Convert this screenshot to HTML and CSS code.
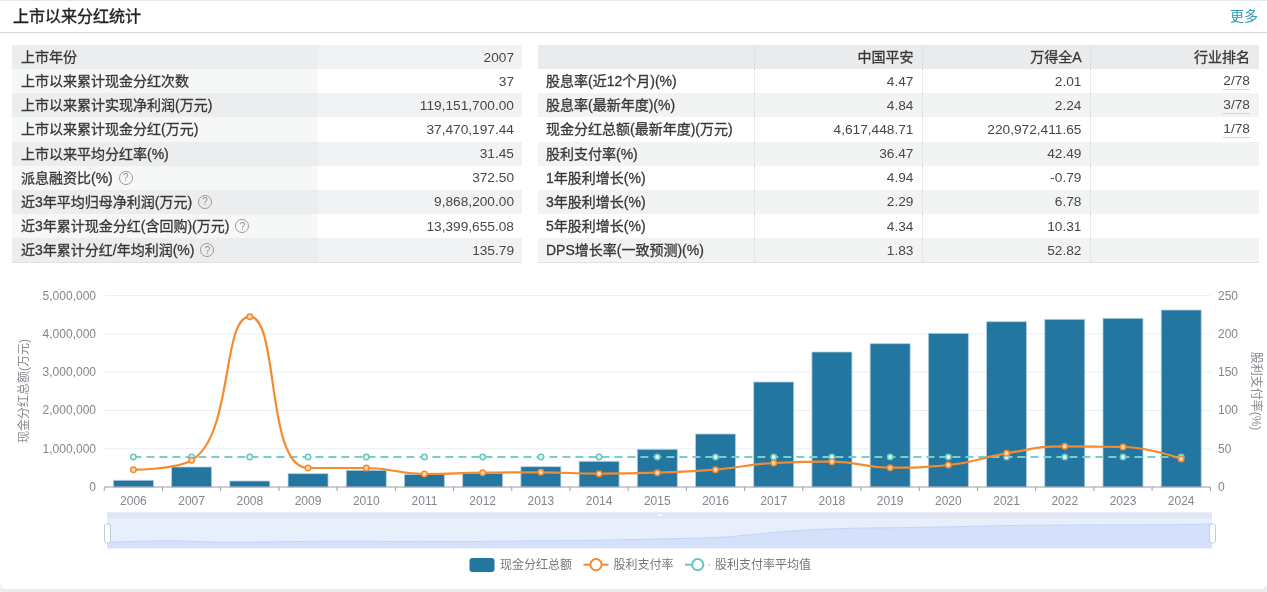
FILE: index.html
```html
<!DOCTYPE html>
<html lang="zh-CN">
<head>
<meta charset="utf-8">
<title>上市以来分红统计</title>
<link rel="stylesheet" href="styles.css">
</head>
<body>
<main class="card">
  <header class="card-head">
    <h1 class="card-title">上市以来分红统计</h1>
    <a class="more" href="#">更多</a>
  </header>
  <section class="tables">
    <div class="table table-left">
      <div class="row"><div class="label">上市年份</div><div class="val">2007</div></div>
      <div class="row"><div class="label">上市以来累计现金分红次数</div><div class="val">37</div></div>
      <div class="row"><div class="label">上市以来累计实现净利润(万元)</div><div class="val">119,151,700.00</div></div>
      <div class="row"><div class="label">上市以来累计现金分红(万元)</div><div class="val">37,470,197.44</div></div>
      <div class="row"><div class="label">上市以来平均分红率(%)</div><div class="val">31.45</div></div>
      <div class="row"><div class="label">派息融资比(%)<span class="help">?</span></div><div class="val">372.50</div></div>
      <div class="row"><div class="label">近3年平均归母净利润(万元)<span class="help">?</span></div><div class="val">9,868,200.00</div></div>
      <div class="row"><div class="label">近3年累计现金分红(含回购)(万元)<span class="help">?</span></div><div class="val">13,399,655.08</div></div>
      <div class="row"><div class="label">近3年累计分红/年均利润(%)<span class="help">?</span></div><div class="val">135.79</div></div>
    </div>
    <div class="table table-right">
      <div class="row head"><div class="label"></div><div class="val">中国平安</div><div class="val">万得全A</div><div class="val">行业排名</div></div>
      <div class="row"><div class="label">股息率(近12个月)(%)</div><div class="val">4.47</div><div class="val">2.01</div><div class="val"><span class="rank">2/78</span></div></div>
      <div class="row"><div class="label">股息率(最新年度)(%)</div><div class="val">4.84</div><div class="val">2.24</div><div class="val"><span class="rank">3/78</span></div></div>
      <div class="row"><div class="label">现金分红总额(最新年度)(万元)</div><div class="val">4,617,448.71</div><div class="val">220,972,411.65</div><div class="val"><span class="rank">1/78</span></div></div>
      <div class="row"><div class="label">股利支付率(%)</div><div class="val">36.47</div><div class="val">42.49</div><div class="val"></div></div>
      <div class="row"><div class="label">1年股利增长(%)</div><div class="val">4.94</div><div class="val">-0.79</div><div class="val"></div></div>
      <div class="row"><div class="label">3年股利增长(%)</div><div class="val">2.29</div><div class="val">6.78</div><div class="val"></div></div>
      <div class="row"><div class="label">5年股利增长(%)</div><div class="val">4.34</div><div class="val">10.31</div><div class="val"></div></div>
      <div class="row"><div class="label">DPS增长率(一致预测)(%)</div><div class="val">1.83</div><div class="val">52.82</div><div class="val"></div></div>
    </div>
  </section>
  <div class="chart" id="chart"></div>
</main>
<script src="chart.js"></script>
</body>
</html>
```
FILE: styles.css
```css
* { box-sizing: border-box; }
html, body { margin: 0; padding: 0; }
body {
  width: 1267px;
  height: 592px;
  overflow: hidden;
  background: #ececec;
  font-family: "Liberation Sans", "Noto Sans CJK SC", sans-serif;
  color: #333;
}
.card {
  height: 589px;
  background: #fff;
  border-top: 1px solid #e6e7ea;
  border-radius: 0 0 6px 6px;
  filter: blur(0.45px);
}
.card-head {
  display: flex;
  align-items: center;
  justify-content: space-between;
  height: 32px;
  padding: 0 9px 3px 13px;
  border-bottom: 1px solid #d6d8de;
}
.card-title {
  margin: 0;
  font-size: 16px;
  font-weight: 400;
  -webkit-text-stroke: 0.4px #222;
  color: #222;
}
.more {
  font-size: 14px;
  color: #2f9bb8;
  text-decoration: none;
}
.tables {
  display: grid;
  grid-template-columns: 510px 721px;
  column-gap: 16px;
  padding: 12px 0 0 12px;
}
.table { border-bottom: 1px solid #dfe1e5; }
.row { display: grid; height: 24.15px; font-size: 13.7px; }
.table-left .row { grid-template-columns: 306px 204px; }
.table-right .row { grid-template-columns: 215.7px 168.8px 168px 168.5px; }
.label, .val {
  display: flex;
  align-items: center;
  white-space: nowrap;
}
.label {
  padding-bottom: 2px;
  font-size: 14px;
  color: #383838;
  -webkit-text-stroke: 0.3px #383838;
}
.table-left .label { padding-left: 9px; }
.table-right .label { padding-left: 8px; }
.val { justify-content: flex-end; padding-right: 8px; color: #484848; }
.table-right .val { padding-right: 9px; }
.table-left .row:nth-child(odd) .label { background: #ecedef; }
.table-left .row:nth-child(odd) .val { background: #f1f2f3; }
.table-left .row:nth-child(even) .label { background: #f6f8f8; }
.table-left .row:nth-child(even) .val { background: #fff; }
.table-right .row:nth-child(even) { background: #fff; }
.table-right .row:nth-child(odd) { background: #f2f4f4; }
.table-right .row.head { background: #e9ebed; }
.table-right .val { border-left: 1px dotted #d3d6da; }
.table-right .head .val {
  padding-bottom: 2px;
  font-size: 14px;
  color: #383838;
  -webkit-text-stroke: 0.3px #383838;
}
.rank {
  display: inline-block;
  line-height: 17px;
  border-bottom: 1px solid #d4d6da;
}
.help {
  display: inline-flex;
  align-items: center;
  justify-content: center;
  width: 14px;
  height: 14px;
  margin: 2px 0 0 6px;
  border: 1px solid #9a9a9a;
  border-radius: 50%;
  font-size: 10px;
  font-weight: 400;
  color: #8c8c8c;
  -webkit-text-stroke: 0;
}
.chart { height: 323px; }
.chart svg { display: block; width: 1267px; height: 323px; }
.tick { font-size: 12px; fill: #85858f; }
.axis-name { font-size: 12px; fill: #8a8a92; }
.legend-text { font-size: 12px; fill: #777; }
```
FILE: chart.js
```js
var NS = 'http://www.w3.org/2000/svg';
var host = document.getElementById('chart');
var svg = document.createElementNS(NS, 'svg');
svg.setAttribute('viewBox', '0 263 1267 323');
host.appendChild(svg);

function el(name, attrs, text) {
  var n = document.createElementNS(NS, name);
  for (var k in attrs) n.setAttribute(k, attrs[k]);
  if (text !== undefined) n.textContent = text;
  svg.appendChild(n);
  return n;
}

var X0 = 104.3, X1 = 1210.3, Y0 = 487, YT = 295.7;
var step = (X1 - X0) / 19;
var years = [2006,2007,2008,2009,2010,2011,2012,2013,2014,2015,2016,2017,2018,2019,2020,2021,2022,2023,2024];
var barTop = [480.3,467,481,473.7,470.3,474.5,473.3,466.7,461.3,449.3,434,382,352,343.7,333.3,321.7,319.3,318.3,310];
var rate = [469.7,460.3,316.7,468,468,474,472.7,472.3,473.7,472.7,469.7,463,461.7,467.7,465,453.3,446.3,447,459];
var AVG = 457;
function cx(i) { return X0 + step * (i + 0.5); }

// echarts style smoothing with the no-overshoot clamp
function smooth(pts, s) {
  var d = 'M' + pts[0][0] + ' ' + pts[0][1];
  var n = pts.length;
  var cp = pts[0].slice();
  for (var i = 0; i < n - 1; i++) {
    var p = pts[i], nx = pts[i + 1], c2;
    if (i + 2 < n) {
      var q = nx, a = p, b = pts[i + 2];
      var vx = b[0] - a[0], vy = b[1] - a[1];
      var l0 = Math.hypot(q[0] - a[0], q[1] - a[1]);
      var l1 = Math.hypot(b[0] - q[0], b[1] - q[1]);
      var r = l1 / (l0 + l1);
      var nc = [q[0] + vx * s * r, q[1] + vy * s * r];
      nc[0] = Math.min(nc[0], Math.max(b[0], q[0])); nc[0] = Math.max(nc[0], Math.min(b[0], q[0]));
      nc[1] = Math.min(nc[1], Math.max(b[1], q[1])); nc[1] = Math.max(nc[1], Math.min(b[1], q[1]));
      vx = nc[0] - q[0]; vy = nc[1] - q[1];
      c2 = [q[0] - vx * l0 / l1, q[1] - vy * l0 / l1];
      c2[0] = Math.min(c2[0], Math.max(a[0], q[0])); c2[0] = Math.max(c2[0], Math.min(a[0], q[0]));
      c2[1] = Math.min(c2[1], Math.max(a[1], q[1])); c2[1] = Math.max(c2[1], Math.min(a[1], q[1]));
      vx = q[0] - c2[0]; vy = q[1] - c2[1];
      nc = [q[0] + vx * l1 / l0, q[1] + vy * l1 / l0];
      d += 'C' + cp[0] + ' ' + cp[1] + ' ' + c2[0] + ' ' + c2[1] + ' ' + q[0] + ' ' + q[1];
      cp = nc;
    } else {
      d += 'C' + cp[0] + ' ' + cp[1] + ' ' + nx[0] + ' ' + nx[1] + ' ' + nx[0] + ' ' + nx[1];
    }
  }
  return d;
}

// grid
for (var g = 0; g <= 5; g++) {
  var gy = Y0 - (Y0 - YT) * g / 5;
  if (g > 0) el('line', { x1: X0, x2: X1, y1: gy, y2: gy, stroke: '#e9edf6', 'stroke-width': 1 });
  var left = g === 0 ? '0' : g + ',000,000';
  el('text', { x: 96, y: gy + 4, 'text-anchor': 'end', class: 'tick' }, left);
  el('text', { x: 1218, y: gy + 4, class: 'tick' }, String(g * 50));
}

// bars
years.forEach(function (y, i) {
  el('rect', { x: cx(i) - 20, y: barTop[i], width: 40, height: Y0 - barTop[i], fill: '#23769f', stroke: '#b4d0e0', 'stroke-width': 0.8 });
});

// x axis
el('line', { x1: X0, x2: X1, y1: Y0, y2: Y0, stroke: '#9a9aa6', 'stroke-width': 1 });
for (var t = 0; t <= 19; t++) {
  var tx = X0 + step * t;
  el('line', { x1: tx, x2: tx, y1: Y0, y2: Y0 + 4, stroke: '#9a9aa6', 'stroke-width': 1 });
}
years.forEach(function (y, i) {
  el('text', { x: cx(i), y: 504.5, 'text-anchor': 'middle', class: 'tick' }, String(y));
});

// axis names
el('text', { transform: 'translate(27.5 391) rotate(-90)', 'text-anchor': 'middle', class: 'axis-name' }, '现金分红总额(万元)');
el('text', { transform: 'translate(1252 391) rotate(90)', 'text-anchor': 'middle', class: 'axis-name' }, '股利支付率(%)');

// average line
el('line', { x1: cx(0), x2: cx(18), y1: AVG, y2: AVG, stroke: '#78cfc9', 'stroke-width': 2.2, 'stroke-dasharray': '8 5' });

// rate line
var pts = rate.map(function (v, i) { return [cx(i), v]; });
el('path', { d: smooth(pts, 0.5), fill: 'none', stroke: '#f68a2e', 'stroke-width': 2.2 });

// symbols
years.forEach(function (y, i) {
  el('circle', { cx: cx(i), cy: AVG, r: 2.7, fill: '#e8f8f6', stroke: '#66c6c0', 'stroke-width': 1.5 });
});
pts.forEach(function (p) {
  el('circle', { cx: p[0], cy: p[1], r: 2.7, fill: '#fcd9b8', stroke: '#f68a2e', 'stroke-width': 1.5 });
});

// data zoom
var ZL = 107, ZR = 1212, ZT = 512.3, ZM = 518.7, ZB = 548.3;
el('rect', { x: ZL, y: ZT, width: ZR - ZL, height: ZM - ZT, fill: '#dfe5f2' });
el('rect', { x: ZL, y: ZM, width: ZR - ZL, height: ZB - ZM, fill: '#e7eefc' });
var zoomPts = barTop.map(function (v, i) {
  return [ZL + (ZR - ZL) * i / 18, 543 - (Y0 - v) / 177 * 19];
});
var zoomLine = smooth(zoomPts, 0.3);
el('path', { d: zoomLine + 'L' + ZR + ' ' + ZB + 'L' + ZL + ' ' + ZB + 'Z', fill: '#d5e0fb' });
el('path', { d: zoomLine, fill: 'none', stroke: '#c4d3f9', 'stroke-width': 1 });
el('rect', { x: 657, y: 514, width: 6, height: 2.5, rx: 1, fill: '#f4f6fb' });
[ZL, ZR].forEach(function (x) {
  el('rect', { x: x - 2.5, y: 524, width: 6, height: 19, rx: 2, fill: '#fff', stroke: '#c3cde0', 'stroke-width': 1 });
});

// legend
var LY = 564.7;
el('rect', { x: 469.5, y: 558, width: 25, height: 14, rx: 3, fill: '#23769f' });
el('text', { x: 500, y: LY + 4.3, class: 'legend-text' }, '现金分红总额');
el('line', { x1: 583.5, x2: 608.5, y1: LY, y2: LY, stroke: '#f68a2e', 'stroke-width': 2 });
el('circle', { cx: 596, cy: LY, r: 5.6, fill: '#fff', stroke: '#f68a2e', 'stroke-width': 2 });
el('text', { x: 613.5, y: LY + 4.3, class: 'legend-text' }, '股利支付率');
el('line', { x1: 685, x2: 692, y1: LY, y2: LY, stroke: '#66c6c0', 'stroke-width': 2 });
el('line', { x1: 708.5, x2: 710, y1: LY, y2: LY, stroke: '#8fd6d1', 'stroke-width': 1.5 });
el('circle', { cx: 697.7, cy: LY, r: 5.6, fill: '#fff', stroke: '#66c6c0', 'stroke-width': 2 });
el('text', { x: 715, y: LY + 4.3, class: 'legend-text' }, '股利支付率平均值');
```
